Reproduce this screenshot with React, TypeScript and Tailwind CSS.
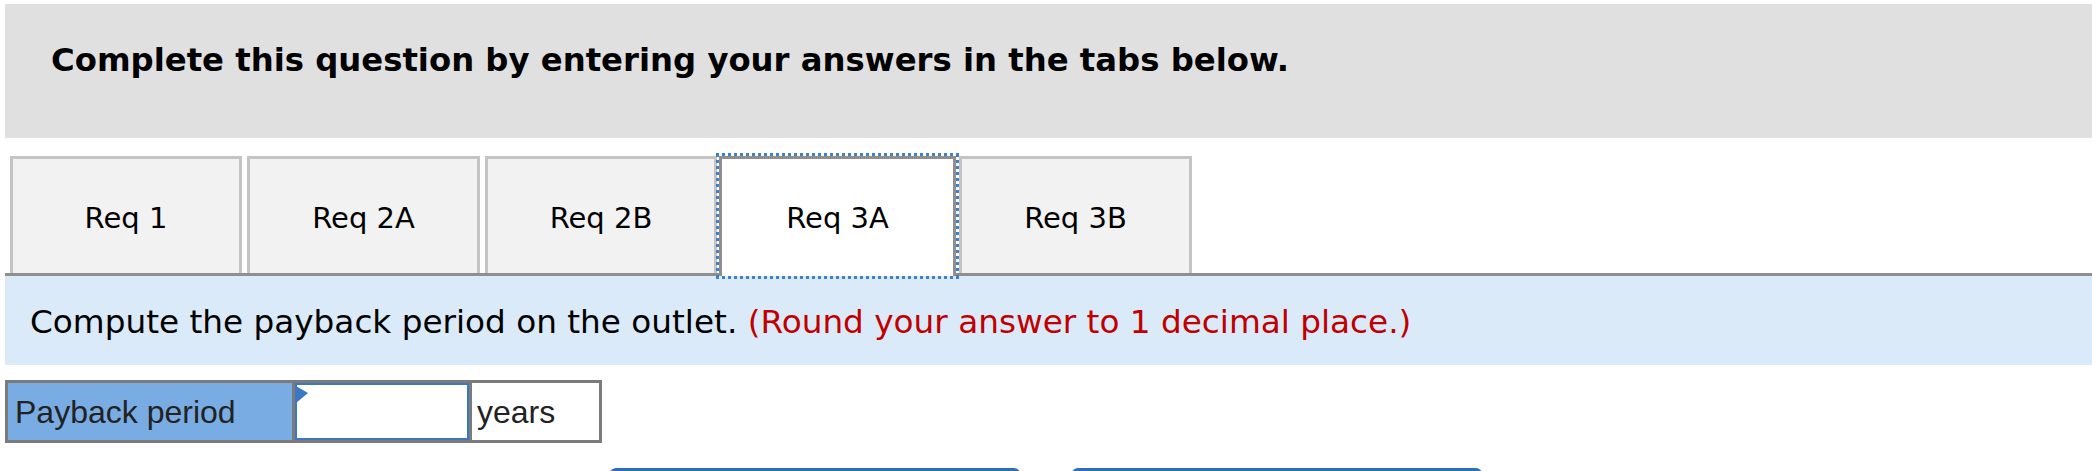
import React from "react";

const verdana = { fontFamily: '"DejaVu Sans", Verdana, sans-serif' };
const arial = { fontFamily: '"Liberation Sans", Arial, sans-serif' };

const tabs = [
  { label: "Req 1", cls: "w-[232px]" },
  { label: "Req 2A", cls: "ml-[5px] w-[233px]" },
  { label: "Req 2B", cls: "ml-[5px] w-[232px]" },
  { label: "Req 3A", cls: "ml-[2px] w-[237px]", active: true },
  { label: "Req 3B", cls: "ml-[3px] w-[233px]" }
];

function Tab({ label, cls, active }: { label: string; cls: string; active?: boolean }) {
  if (active) {
    return (
      <button
        className={`${cls} relative z-10 -mb-[3px] flex h-[120px] items-center justify-center border-[3px] border-b-0 border-[#8f8f8f] bg-white pt-[3px] text-[29px] text-black outline-[3px] outline-offset-0 outline-dotted outline-[#3f7fcc]`}
        style={verdana}
      >
        {label}
      </button>
    );
  }
  return (
    <button
      className={`${cls} flex h-[117px] items-center justify-center border-[3px] border-b-0 border-[#c4c4c4] bg-[#f2f2f2] pt-[6px] text-[29px] text-black`}
      style={verdana}
    >
      {label}
    </button>
  );
}

export default function App() {
  return (
    <div className="h-[471px] overflow-hidden bg-white pl-[5px] pt-[4px]">
      <div className="h-[134px] bg-[#e0e0e0] pl-[46px] pt-[32px]">
        <p className="text-[32.3px] font-bold text-black" style={verdana}>
          Complete this question by entering your answers in the tabs below.
        </p>
      </div>

      <div className="mt-[18px] flex items-end border-b-[3px] border-[#8f8f8f] pl-[5px]">
        {tabs.map((t) => (
          <Tab key={t.label} {...t} />
        ))}
      </div>

      <div className="h-[89px] bg-[#daeaf8] pl-[25px] pt-[22px]">
        <p className="text-[32.7px] text-black" style={verdana}>
          Compute the payback period on the outlet.{" "}
          <span className="text-[#c00000]">(Round your answer to 1 decimal place.)</span>
        </p>
      </div>

      <div className="mt-[15px] flex w-fit border-[3px] border-[#7b7b7b]" style={arial}>
        <div className="flex h-[57px] w-[284px] items-center bg-[#78ace2] pl-[7px] text-[32px] text-[#222]">
          Payback period
        </div>
        <div className="relative w-[177px] border-l-[3px] border-[#7b7b7b]">
          <input
            type="text"
            aria-label="Payback period"
            className="h-full w-full border-2 border-[#3a78c4] bg-white px-2 text-[32px] outline-none"
          />
          <svg
            className="absolute left-[1px] top-[3px]"
            width="12"
            height="17"
            viewBox="0 0 12 17"
          >
            <polygon points="0,0 12,7 0,17" fill="#3a78c4" />
          </svg>
        </div>
        <div className="flex w-[130px] items-center border-l-[3px] border-[#7b7b7b] bg-white pl-[5px] text-[32px] text-[#222]">
          years
        </div>
      </div>

      <div className="mt-[25px] flex justify-center gap-[52px] pr-[5px]">
        <button aria-label="Previous" className="h-[56px] w-[410px] rounded-[6px] bg-[#2f6eb5]" />
        <button aria-label="Next" className="h-[56px] w-[410px] rounded-[6px] bg-[#2f6eb5]" />
      </div>
    </div>
  );
}
